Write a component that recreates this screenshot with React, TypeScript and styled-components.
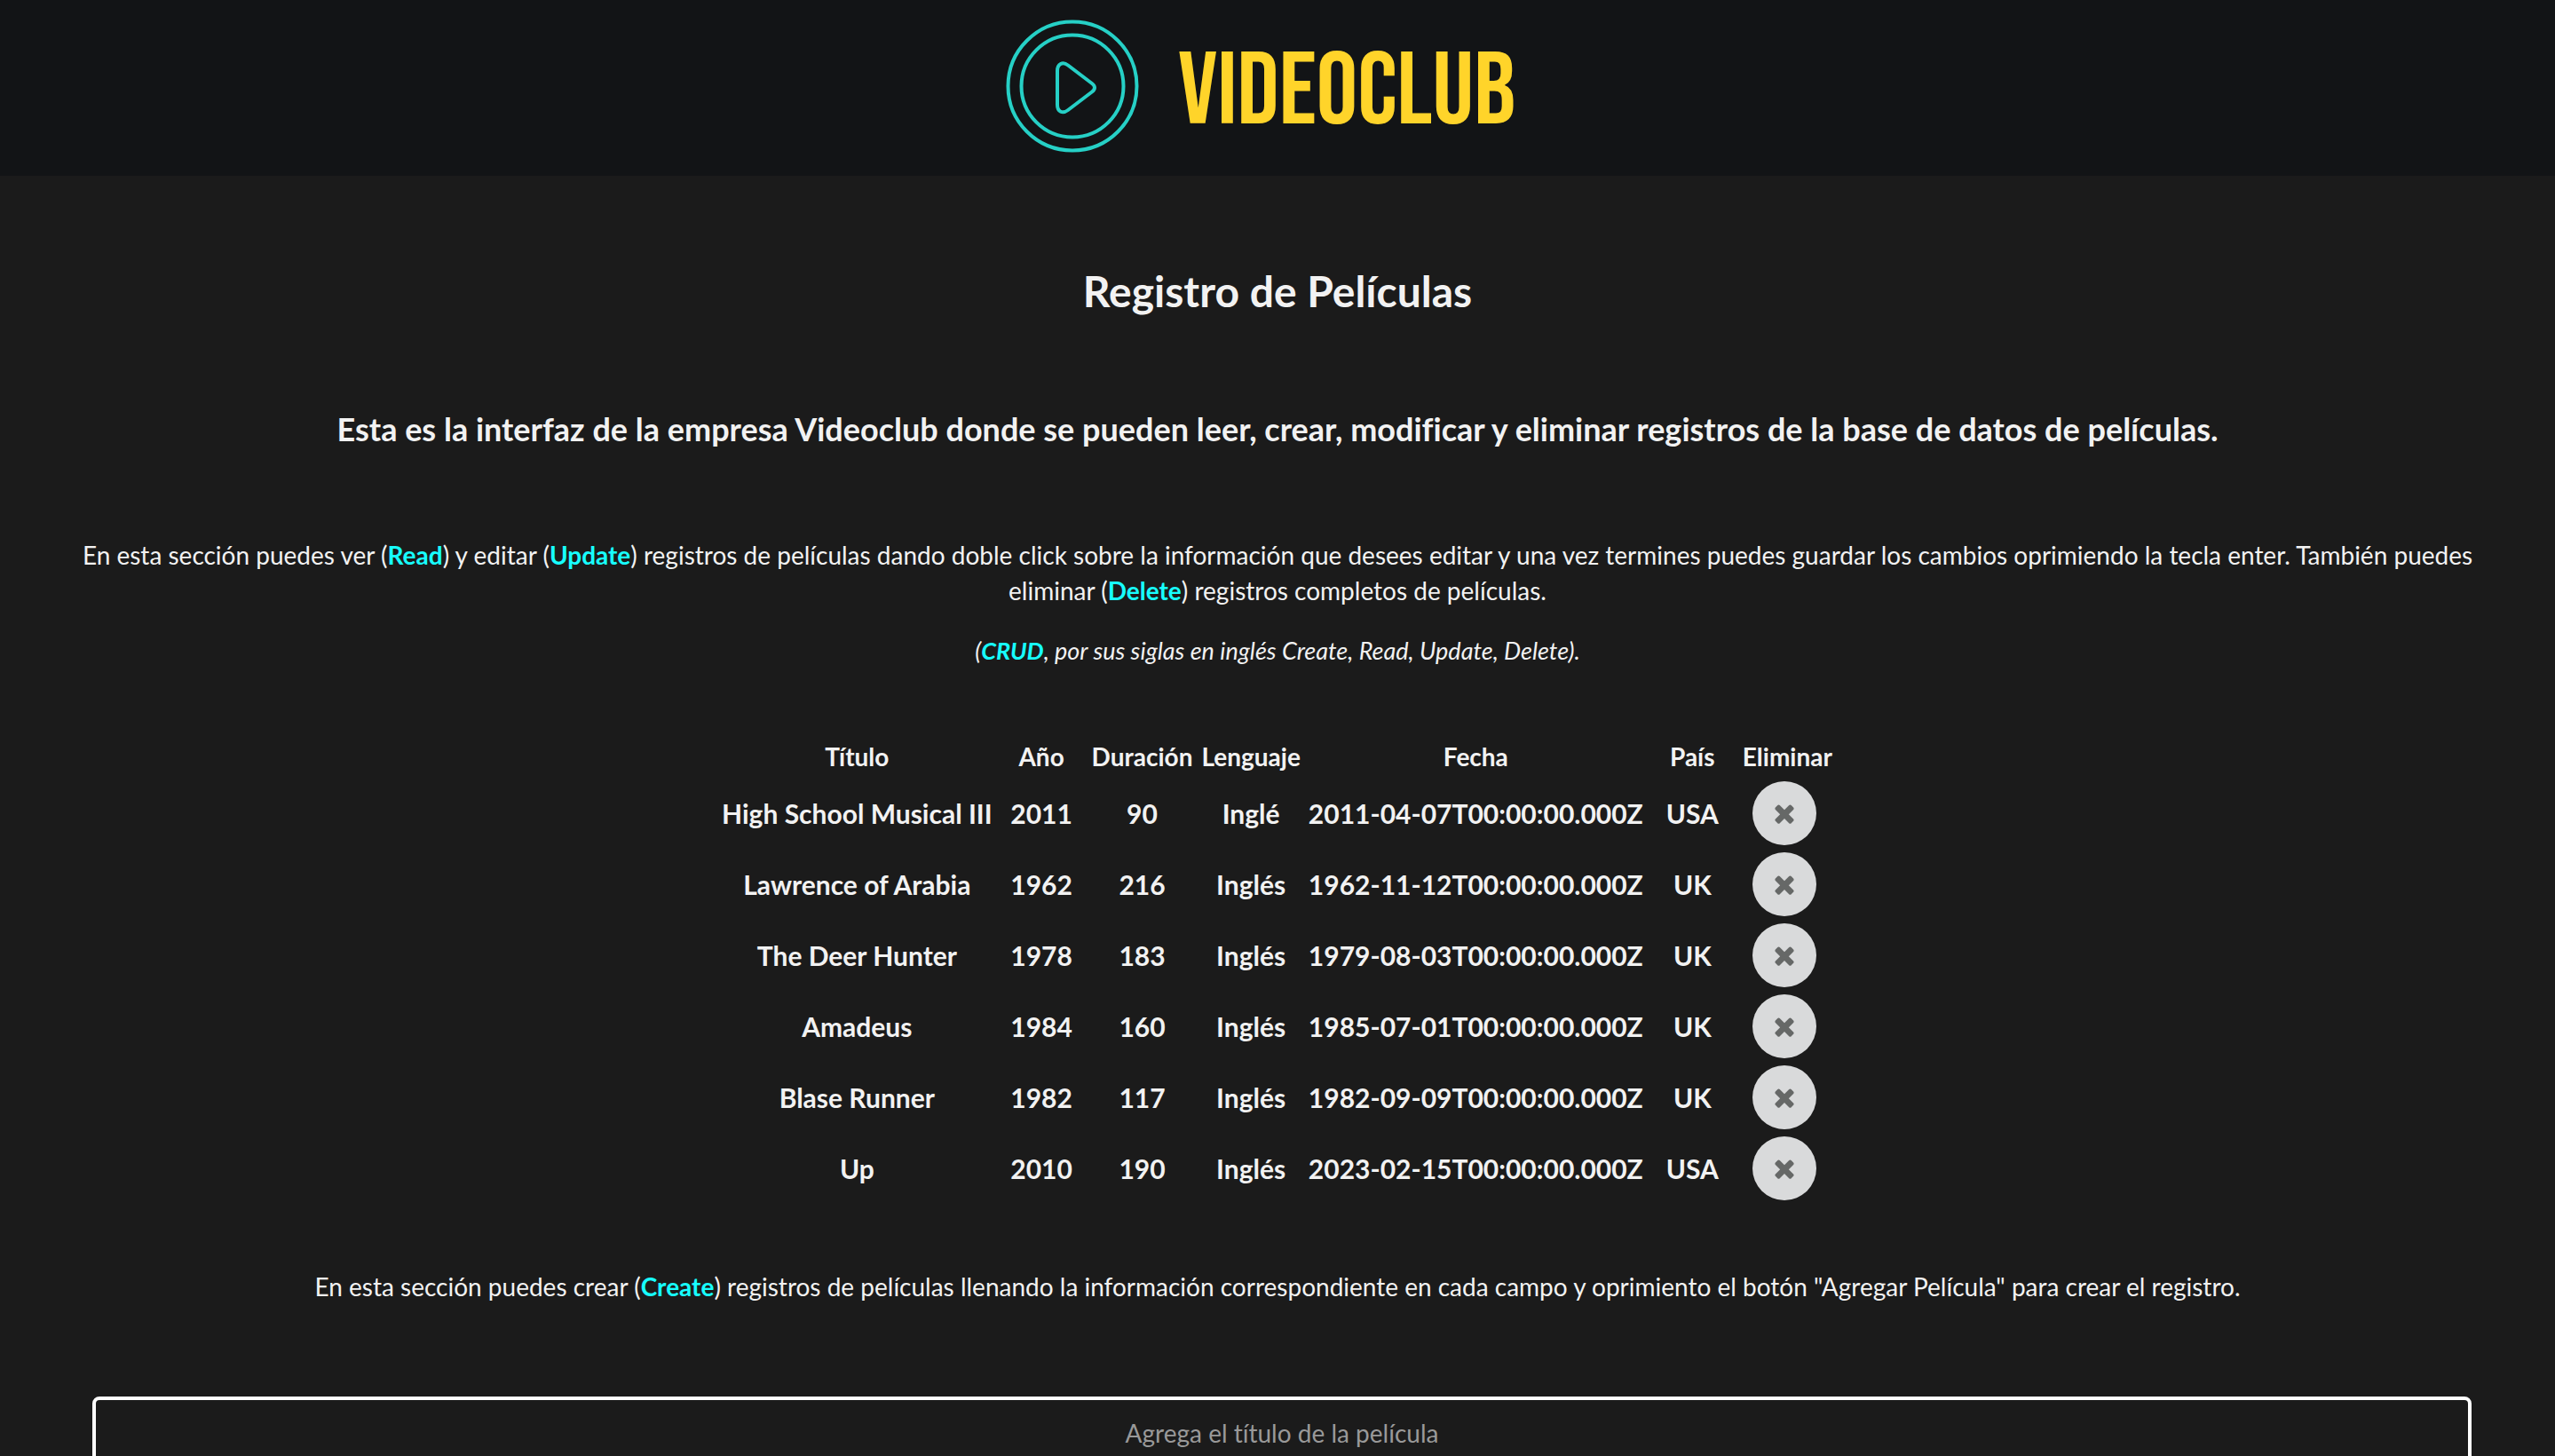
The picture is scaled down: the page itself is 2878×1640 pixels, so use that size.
import React, { useState } from 'react';
import styled, { createGlobalStyle } from 'styled-components';

const GlobalStyle = createGlobalStyle`
  *, *::before, *::after { box-sizing: border-box; }
  html, body { margin: 0; background: #1b1b1b; }
  body {
    color: #f2f2f2;
    font-family: Lato, 'Liberation Sans', sans-serif;
    font-size: 28px;
    font-variant-ligatures: none;
    line-height: 40px;
  }
`;

const Page = styled.div`
  display: flex;
  flex-direction: column;
  height: 100vh;
  overflow-x: hidden;
  overflow-y: auto;
  scrollbar-width: none;
`;

const Header = styled.header`
  display: flex;
  flex: none;
  justify-content: center;
  align-items: flex-start;
  height: 198px;
  padding: 20px 40px 0 0;
  background: #121416;
`;

const Brand = styled.a`
  display: flex;
  align-items: center;
  gap: 42px;
  color: #ffd42a;
  text-decoration: none;
`;

const Mark = styled.svg`
  width: 154px;
  height: 154px;
  fill: none;
  stroke: #26d0c6;
  stroke-width: 4;
  stroke-linejoin: round;
`;

const Wordmark = styled.span`
  padding-top: 16px;
  font-family: 'Bebas Neue', 'Roboto Condensed', 'Liberation Sans Narrow', 'Liberation Sans', sans-serif;
  font-size: 116px;
  font-weight: 400;
  line-height: 136px;
`;

const Main = styled.main`
  display: flex;
  flex-direction: column;
  align-items: center;
  padding: 98px 0 56px;
  text-align: center;
`;

const Title = styled.h1`
  margin: 0;
  font-size: 48px;
  line-height: 64px;
`;

const Subtitle = styled.h2`
  margin: 95px 0 94px;
  font-size: 36px;
  line-height: 56px;
`;

const Text = styled.p`
  margin: 0 0 28px;
  padding: 0 92px;
`;

const Note = styled(Text)`
  font-size: 27px;
  font-style: italic;
`;

const Keyword = styled.strong`
  color: #17ffff;
`;

const MovieTable = styled.table`
  margin: 45px 0 71px;
  border-spacing: 4px;
`;

const HeadCell = styled.th`
  padding: 2px 3px;
`;

const Cell = styled.td`
  min-width: 99px;
  padding: 2px;
  font-size: 30px;
  font-weight: 700;
`;

const DeleteSlot = styled.div`
  padding-right: 7px;
`;

const DeleteButton = styled.button`
  display: flex;
  align-items: center;
  justify-content: center;
  width: 72px;
  height: 72px;
  margin: 0 auto;
  padding: 0;
  border: 0;
  border-radius: 50%;
  background: #d9dadb;
  color: #666867;
  cursor: pointer;
`;

const Cross = styled.svg`
  width: 32px;
  height: 32px;
  fill: currentColor;
`;

const Form = styled.form`
  display: flex;
  flex-direction: column;
  align-self: stretch;
  margin-top: 76px;
  padding: 0 94px 0 104px;
`;

const HiddenLabel = styled.label`
  position: absolute;
  width: 1px;
  height: 1px;
  overflow: hidden;
  clip-path: inset(50%);
`;

const TextField = styled.input`
  width: 100%;
  height: 82px;
  padding: 0 24px;
  border: 4px solid #fff;
  border-radius: 8px;
  background: transparent;
  color: #f2f2f2;
  font: inherit;
  text-align: center;

  &::placeholder { color: #999; opacity: 1; }
`;

interface Movie {
  title: string;
  year: number;
  length: number;
  language: string;
  date: string;
  country: string;
}

const initialMovies: Movie[] = [
  { title: 'High School Musical III', year: 2011, length: 90, language: 'Inglé', date: '2011-04-07T00:00:00.000Z', country: 'USA' },
  { title: 'Lawrence of Arabia', year: 1962, length: 216, language: 'Inglés', date: '1962-11-12T00:00:00.000Z', country: 'UK' },
  { title: 'The Deer Hunter', year: 1978, length: 183, language: 'Inglés', date: '1979-08-03T00:00:00.000Z', country: 'UK' },
  { title: 'Amadeus', year: 1984, length: 160, language: 'Inglés', date: '1985-07-01T00:00:00.000Z', country: 'UK' },
  { title: 'Blase Runner', year: 1982, length: 117, language: 'Inglés', date: '1982-09-09T00:00:00.000Z', country: 'UK' },
  { title: 'Up', year: 2010, length: 190, language: 'Inglés', date: '2023-02-15T00:00:00.000Z', country: 'USA' },
];

const columns = ['Título', 'Año', 'Duración', 'Lenguaje', 'Fecha', 'País', 'Eliminar'];

function Logo() {
  return (
    <Brand href="#">
      <Mark viewBox="0 0 154 154" aria-hidden="true">
        <circle cx="77" cy="77" r="72.5" />
        <circle cx="77" cy="77" r="57.5" />
        <path d="M60 60v38c0 8 6 10.5 12 6l27-20.5c4-3 4-6.5 0-9.5L72 53.5c-6-4.5-12-1.5-12 6.5Z" />
      </Mark>
      <Wordmark>VIDEOCLUB</Wordmark>
    </Brand>
  );
}

function MovieRow({ movie, onDelete }: { movie: Movie; onDelete: () => void }) {
  return (
    <tr>
      <Cell>{movie.title}</Cell>
      <Cell>{movie.year}</Cell>
      <Cell>{movie.length}</Cell>
      <Cell>{movie.language}</Cell>
      <Cell>{movie.date}</Cell>
      <Cell>{movie.country}</Cell>
      <Cell>
        <DeleteSlot>
          <DeleteButton type="button" aria-label={`Eliminar ${movie.title}`} onClick={onDelete}>
            <Cross viewBox="0 0 1792 1792" aria-hidden="true">
              <path d="M1490 1322q0 40-28 68l-136 136q-28 28-68 28t-68-28l-294-294-294 294q-28 28-68 28t-68-28l-136-136q-28-28-28-68t28-68l294-294-294-294q-28-28-28-68t28-68l136-136q28-28 68-28t68 28l294 294 294-294q28-28 68-28t68 28l136 136q28 28 28 68t-28 68l-294 294 294 294q28 28 28 68z" />
            </Cross>
          </DeleteButton>
        </DeleteSlot>
      </Cell>
    </tr>
  );
}

export default function App() {
  const [movies, setMovies] = useState(initialMovies);
  const [title, setTitle] = useState('');

  return (
    <Page>
      <GlobalStyle />
      <Header>
        <Logo />
      </Header>
      <Main>
        <Title>Registro de Películas</Title>
        <Subtitle>
          Esta es la interfaz de la empresa Videoclub donde se pueden leer, crear, modificar y eliminar registros de la base de datos de películas.
        </Subtitle>
        <Text>
          En esta sección puedes ver (<Keyword>Read</Keyword>) y editar (<Keyword>Update</Keyword>) registros de películas dando doble click sobre la información que desees editar y una vez termines puedes guardar los cambios oprimiendo la tecla enter. También puedes eliminar (<Keyword>Delete</Keyword>) registros completos de películas.
        </Text>
        <Note>
          (<Keyword>CRUD</Keyword>, por sus siglas en inglés Create, Read, Update, Delete).
        </Note>
        <MovieTable>
          <thead>
            <tr>
              {columns.map((name) => (
                <HeadCell key={name} scope="col">{name}</HeadCell>
              ))}
            </tr>
          </thead>
          <tbody>
            {movies.map((movie) => (
              <MovieRow
                key={movie.title}
                movie={movie}
                onDelete={() => setMovies(movies.filter((other) => other !== movie))}
              />
            ))}
          </tbody>
        </MovieTable>
        <Text>
          En esta sección puedes crear (<Keyword>Create</Keyword>) registros de películas llenando la información correspondiente en cada campo y oprimiento el botón "Agregar Película" para crear el registro.
        </Text>
        <Form>
          <HiddenLabel htmlFor="movie-title">Título</HiddenLabel>
          <TextField
            id="movie-title"
            value={title}
            onChange={(event) => setTitle(event.target.value)}
            placeholder="Agrega el título de la película"
          />
        </Form>
      </Main>
    </Page>
  );
}
